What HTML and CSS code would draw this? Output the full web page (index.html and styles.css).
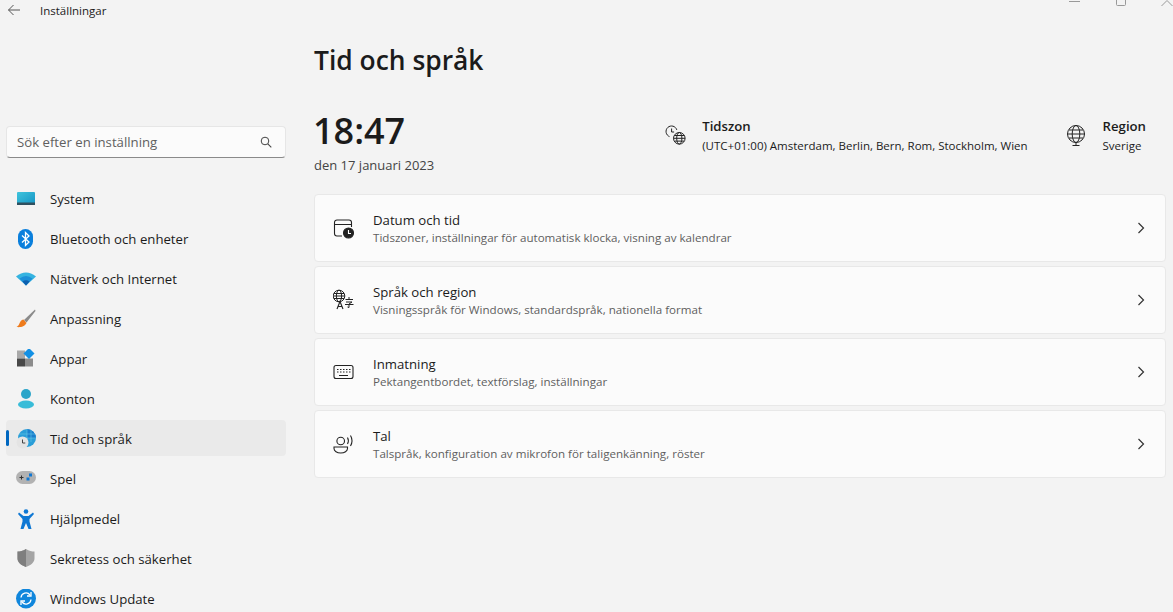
FILE: index.html
```html
<!DOCTYPE html>
<html lang="sv">
<head>
    <meta charset="UTF-8">
    <title>Inställningar</title>
    <link rel="stylesheet" href="styles.css">
</head>
<body>
    <div class="window">
        <aside class="sidebar">
            <div class="titlebar">
                <svg class="back" width="14" height="12" viewBox="0 0 14 12"><path d="M13 6H1.500M6.500 1L1.500 6l5 5" fill="none" stroke="#555" stroke-width="1"/></svg>
                <span class="app-name">Inställningar</span>
            </div>
            <div class="search">
                <span class="search-text">Sök efter en inställning</span>
                <svg width="12" height="12" viewBox="0 0 12 12"><circle cx="5" cy="5" r="3.800" fill="none" stroke="#444" stroke-width="1"/><path d="M7.800 7.800L11.300 11.300" stroke="#444" stroke-width="1.100"/></svg>
            </div>
            <nav class="nav">
                <div class="nav-item">
                    <svg class="nav-icon" viewBox="0 0 20 20"><defs><linearGradient id="sys" x1="0" y1="0" x2="1" y2="1"><stop offset="0" stop-color="#3fc4dc"/><stop offset="1" stop-color="#1493c4"/></linearGradient></defs><rect x="1" y="3" width="18" height="13" rx="1" fill="url(#sys)"/><rect x="1" y="13.500" width="18" height="2.500" fill="#30505f"/></svg>
                    <span>System</span>
                </div>
                <div class="nav-item">
                    <svg class="nav-icon" viewBox="0 0 20 20"><rect x="2" y="0" width="15" height="20" rx="7.500" fill="#0a7fdc"/><path d="M6 6.500l7 6.500-3.500 3.500V3.500L13 7 6 13.500" fill="none" stroke="#fff" stroke-width="1.300"/></svg>
                    <span>Bluetooth och enheter</span>
                </div>
                <div class="nav-item">
                    <svg class="nav-icon" viewBox="0 0 20 20"><path d="M0 7.500Q10 -0.500 20 7.500L10 16.500Z" fill="#35b3e0"/><path d="M3.500 9.500Q10 4.500 16.500 9.500L10 16.500Z" fill="#1c8fd8"/><path d="M6.500 12.500Q10 10 13.500 12.500L10 16.500Z" fill="#0d5fae"/></svg>
                    <span>Nätverk och Internet</span>
                </div>
                <div class="nav-item">
                    <svg class="nav-icon" viewBox="0 0 20 20"><path d="M19 0.500L8 11l2.500 2.500L19.500 2Z" fill="#8b8b8b"/><path d="M7.500 10.500c-3 .5-3.500 3-4.500 5-.4.900-1.400 1.800-2.500 2.500 3.500.5 8 0 10-4Z" fill="#ee7b1c"/></svg>
                    <span>Anpassning</span>
                </div>
                <div class="nav-item">
                    <svg class="nav-icon" viewBox="0 1.500 20 20"><rect x="1" y="3" width="8" height="8" fill="#a8a8a8"/><rect x="1" y="11" width="8" height="8" fill="#484848"/><rect x="9" y="11" width="8" height="8" fill="#8c8c8c"/><path d="M13 0.500l5.500 5.500-5.500 5.500L7.500 6Z" fill="#1390e4"/></svg>
                    <span>Appar</span>
                </div>
                <div class="nav-item">
                    <svg class="nav-icon" viewBox="0 2 20 20"><circle cx="10" cy="7" r="5" fill="#2ba5c9"/><ellipse cx="10" cy="17.500" rx="8" ry="4" fill="#38bcd8"/></svg>
                    <span>Konton</span>
                </div>
                <div class="nav-item active">
                    <svg class="nav-icon" viewBox="0 0 20 20"><circle cx="11" cy="9" r="9" fill="#2a9ed8"/><path d="M11 0a9 9 0 0 1 9 9H11Z" fill="#1b7fcc"/><path d="M3 5h16M11 0v12M15 1v12M2 9h18" stroke="#67c6e8" stroke-width=".6" fill="none"/><circle cx="6.500" cy="13.500" r="6" fill="#e4e4e4"/><path d="M6.500 10.500v3.500h2.800" fill="none" stroke="#444" stroke-width="1"/></svg>
                    <span>Tid och språk</span>
                </div>
                <div class="nav-item">
                    <svg class="nav-icon" viewBox="0 0 20 20"><rect x="0" y="2" width="20" height="13" rx="6.500" fill="#b2b2b2"/><path d="M3.500 8.500h4M5.500 6.500v4" stroke="#333" stroke-width="1"/><rect x="13" y="4.500" width="3" height="3" fill="#0f78d4"/><rect x="10.500" y="8.500" width="3" height="3" fill="#0f78d4"/></svg>
                    <span>Spel</span>
                </div>
                <div class="nav-item">
                    <svg class="nav-icon" viewBox="0 0 20 20"><circle cx="10" cy="2.500" r="2.300" fill="#0f78d4"/><path d="M3 3.500l4.500 3.500h5L17 3.500l1 1.500-4.500 5v2.500L15.500 20h-3L10 14l-2.500 6h-3l2-7.500V10L2 5Z" fill="#0f78d4"/></svg>
                    <span>Hjälpmedel</span>
                </div>
                <div class="nav-item">
                    <svg class="nav-icon" viewBox="0 0 20 20"><path d="M10 0c3 2 6 2.500 8.500 2.500v7c0 4-4 7-8.500 8.500-4.500-1.500-8.500-4.500-8.500-8.500v-7C4 2.500 7 2 10 0Z" fill="#a4a4a4"/><path d="M10 0v18c-4.500-1.500-8.500-4.500-8.500-8.500v-7C4 2.500 7 2 10 0Z" fill="#7e7e7e"/></svg>
                    <span>Sekretess och säkerhet</span>
                </div>
                <div class="nav-item">
                    <svg class="nav-icon" viewBox="0 0.500 20 20"><circle cx="10" cy="10" r="10" fill="#0f86dc"/><path d="M5 9a5 5 0 0 1 9-2.500M15 11a5 5 0 0 1-9 2.500" fill="none" stroke="#fff" stroke-width="1.300"/><path d="M15 3.500v4h-4M5 16.500v-4h4" fill="none" stroke="#fff" stroke-width="1.300"/></svg>
                    <span>Windows Update</span>
                </div>
            </nav>
        </aside>
        <main class="content">
            <div class="caption">
                <svg width="108" height="8" viewBox="0 0 108 8"><path d="M4 1.500h11" stroke="#999"/><path d="M51.500 0v4.500a1 1 0 0 0 1 1h7a1 1 0 0 0 1-1V0" fill="none" stroke="#999"/><path d="M96.500 6l5.500-5.500L107.500 6" fill="none" stroke="#999"/></svg>
            </div>
            <h1 class="page-title">Tid och språk</h1>
            <div class="summary">
                <div class="clock">
                    <div class="time">18:47</div>
                    <div class="date">den 17 januari 2023</div>
                </div>
                <div class="summary-info">
                    <svg class="summary-icon" width="22" height="22" viewBox="0 0 22 22" fill="none" stroke="#222" stroke-width="1"><path d="M4.500 12.600A5.500 5.500 0 1 1 11.800 5.900"/><path d="M6.600 4.500v3.500h2.500"/><circle cx="14.300" cy="14.300" r="5.800"/><ellipse cx="14.300" cy="14.300" rx="2.600" ry="5.800"/><path d="M8.500 14.300h11.600M9.500 11.500h9.600M9.500 17.100h9.600"/></svg>
                    <div>
                        <div class="info-title">Tidszon</div>
                        <div class="info-text">(UTC+01:00) Amsterdam, Berlin, Bern, Rom, Stockholm, Wien</div>
                    </div>
                </div>
                <div class="summary-info region">
                    <svg class="summary-icon region-icon" width="20" height="22" viewBox="0 0 20 22" fill="none" stroke="#222" stroke-width="1"><circle cx="10" cy="10" r="8.500"/><ellipse cx="10" cy="10" rx="3.800" ry="8.500"/><path d="M1.500 10h17M3 6h14M3 14h14M10 18.500v3M6.500 21.500h7"/></svg>
                    <div>
                        <div class="info-title">Region</div>
                        <div class="info-text">Sverige</div>
                    </div>
                </div>
            </div>
            <section class="cards">
                <div class="card">
                    <svg class="card-icon" viewBox="0 0 22 22" fill="none" stroke="#222" stroke-width="1.100"><path d="M9 19H4a2.500 2.500 0 0 1-2.500-2.500v-11A2.500 2.500 0 0 1 4 3h12a2.500 2.500 0 0 1 2.500 2.500V10M2 7.500h16"/><circle cx="15.500" cy="16" r="5" fill="#222"/><path d="M15.500 13v3.500h2.500" stroke="#fff"/></svg>
                    <div class="card-text">
                        <div class="card-title">Datum och tid</div>
                        <div class="card-sub">Tidszoner, inställningar för automatisk klocka, visning av kalendrar</div>
                    </div>
                    <svg class="chevron" width="8" height="12" viewBox="0 0 8 12"><path d="M1.500 1l5 5-5 5" fill="none" stroke="#333" stroke-width="1.200"/></svg>
                </div>
                <div class="card">
                    <svg class="card-icon" viewBox="0 0 22 22" fill="none" stroke="#222" stroke-width="1"><circle cx="6" cy="7" r="5.800"/><ellipse cx="6" cy="7" rx="2.600" ry="5.800"/><path d="M.2 7h11.600M1 4.500h10M1 9.500h10"/><path d="M4 20l3-7.500 3 7.500M5 17.500h4" fill="#fafafa" stroke-width="1.100"/><path d="M12.500 10.500h7.500M16 8v2.500M13 13h6l-3 2v3.500l-1.500-.5M12 15.500h8.500" fill="none"/></svg>
                    <div class="card-text">
                        <div class="card-title">Språk och region</div>
                        <div class="card-sub">Visningsspråk för Windows, standardspråk, nationella format</div>
                    </div>
                    <svg class="chevron" width="8" height="12" viewBox="0 0 8 12"><path d="M1.500 1l5 5-5 5" fill="none" stroke="#333" stroke-width="1.200"/></svg>
                </div>
                <div class="card">
                    <svg class="card-icon" viewBox="0 0 22 22" fill="none" stroke="#222" stroke-width="1.100"><rect x="1" y="4.500" width="19" height="13" rx="2"/><path d="M4 8.500h1.500M7 8.500h1.500M10 8.500h1.500M13 8.500h1.500M16 8.500h1.500M4 11h1.500M7 11h1.500M10 11h1.500M13 11h1.500M16 11h1.500M6 14.500h9"/></svg>
                    <div class="card-text">
                        <div class="card-title">Inmatning</div>
                        <div class="card-sub">Pektangentbordet, textförslag, inställningar</div>
                    </div>
                    <svg class="chevron" width="8" height="12" viewBox="0 0 8 12"><path d="M1.500 1l5 5-5 5" fill="none" stroke="#333" stroke-width="1.200"/></svg>
                </div>
                <div class="card">
                    <svg class="card-icon" viewBox="0 0 22 22" fill="none" stroke="#222" stroke-width="1.100"><circle cx="7.700" cy="8" r="3.800"/><path d="M1 14h13.500v1.500c0 2.500-3 4.500-6.750 4.500S1 18 1 15.500Z"/><path d="M14.500 4.500q1.800 3.200 0 6.500M17.500 2.500q3 5.200 0 10.500"/></svg>
                    <div class="card-text">
                        <div class="card-title">Tal</div>
                        <div class="card-sub">Talspråk, konfiguration av mikrofon för taligenkänning, röster</div>
                    </div>
                    <svg class="chevron" width="8" height="12" viewBox="0 0 8 12"><path d="M1.500 1l5 5-5 5" fill="none" stroke="#333" stroke-width="1.200"/></svg>
                </div>
            </section>
        </main>
    </div>
</body>
</html>
```

FILE: styles.css
```css
html, body {
    margin: 0;
    height: 100%;
    overflow: hidden;
}
body {
    background-color: #f3f3f3;
    color: #1b1b1b;
    font-family: "Open Sans", "Noto Sans", sans-serif;
    font-size: 13.2px;
}
.window {
    display: flex;
    height: 612px;
}
.sidebar {
    width: 280px;
    padding-left: 6px;
    flex-shrink: 0;
}
.titlebar {
    display: flex;
    align-items: center;
    height: 20px;
}
.back {
    margin-left: 1px;
}
.app-name {
    margin-left: 19px;
    font-size: 11.5px;
}
.search {
    display: flex;
    align-items: center;
    justify-content: space-between;
    box-sizing: border-box;
    height: 32px;
    margin-top: 106px;
    padding: 0 13px 0 10px;
    background-color: #fbfbfb;
    border: 1px solid #e6e6e6;
    border-bottom: 1px solid #8a8a8a;
    border-radius: 4px;
}
.search-text {
    color: #5f5f5f;
}
.nav {
    margin-top: 22px;
}
.nav-item {
    position: relative;
    display: flex;
    align-items: center;
    box-sizing: border-box;
    height: 36px;
    margin-bottom: 4px;
    padding: 2px 0 0 10px;
    border-radius: 4px;
}
.nav-item.active {
    background-color: #eaeaea;
}
.nav-item.active::before {
    content: "";
    position: absolute;
    left: 0;
    top: 10px;
    width: 3px;
    height: 16px;
    border-radius: 2px;
    background-color: #0067c0;
}
.nav-icon {
    width: 20px;
    height: 20px;
    margin-right: 14px;
    flex-shrink: 0;
}
.content {
    flex: 1;
    position: relative;
    padding: 0 7px 0 28px;
}
.caption {
    position: absolute;
    top: 0;
    right: 0;
    line-height: 0;
}
.page-title {
    margin: 0;
    padding-top: 41px;
    font-size: 26.4px;
    font-weight: 600;
    line-height: 38px;
}
.summary {
    display: flex;
    align-items: flex-start;
    height: 115px;
    padding-top: 30px;
    box-sizing: border-box;
}
.clock {
    flex: 1;
}
.time {
    font-size: 36px;
    font-weight: 600;
    line-height: 44px;
    margin-left: -1px;
}
.date {
    color: #444;
    font-size: 13px;
    line-height: 18px;
    margin-top: 3px;
}
.summary-info {
    display: flex;
    padding-top: 8px;
}
.summary-info.region {
    margin-left: 38px;
    margin-right: 20px;
}
.summary-icon {
    margin: 7px 15px 0 0;
}
.region-icon {
    margin-right: 17px;
}
.info-title {
    font-weight: 600;
    line-height: 18px;
}
.info-text {
    font-size: 11.5px;
    line-height: 19px;
    margin-top: 1px;
}
.cards {
    display: flex;
    flex-direction: column;
    gap: 4px;
}
.card {
    display: flex;
    align-items: center;
    box-sizing: border-box;
    height: 68px;
    padding: 0 20px 0 18px;
    background-color: #fbfbfb;
    border: 1px solid #e8e8e8;
    border-radius: 4px;
}
.card-icon {
    width: 22px;
    height: 22px;
    margin-right: 18px;
    flex-shrink: 0;
}
.card-text {
    flex: 1;
    padding-top: 1px;
}
.card-title {
    line-height: 18px;
}
.card-sub {
    color: #5f5f5f;
    font-size: 11.6px;
    line-height: 16px;
    margin-top: 1px;
}
```
